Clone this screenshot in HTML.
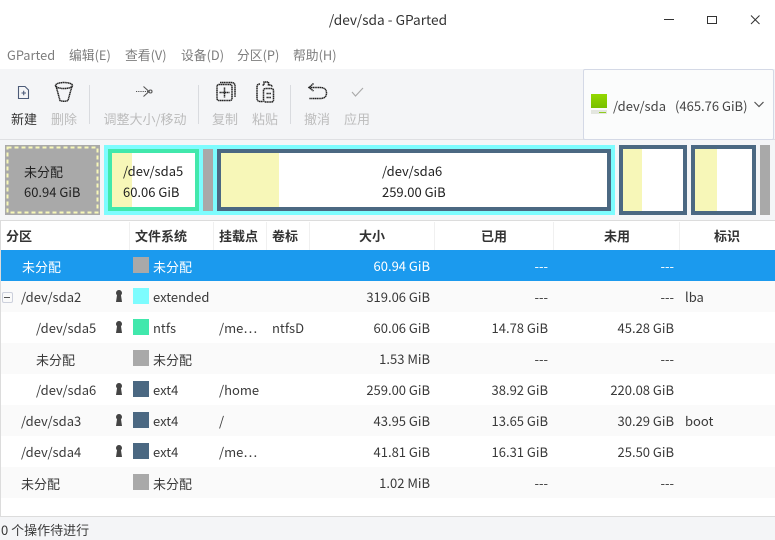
<!DOCTYPE html>
<html><head><meta charset="utf-8">
<style>
html,body{margin:0;padding:0;background:#fff}
#w{position:relative;width:775px;height:540px;overflow:hidden;background:#fff;font-family:"Noto Sans CJK SC","Liberation Sans",sans-serif;font-size:13px;color:#3a3a3a}
#w div,#w span.a{position:absolute}
.t{white-space:nowrap;line-height:18px;height:18px}
.m{top:46px;color:#7d7d7d;font-size:12.800px}
.l{top:110px;font-size:13px;width:60px;text-align:center;color:#bcbcbc}
.sep{width:1px;background:#d9dbdf;top:85px;height:39px}
.h{top:227px;font-weight:bold;font-size:13px;color:#333}
.hs{top:222px;width:1px;height:28px;background:#f0f0f0}
.r{left:1px;width:774px;height:31px}
.sw{left:133px;width:16px;height:16px}
.rt{text-align:right}
</style></head><body>
<div id="w">
<div class="t" style="left:0;width:776px;text-align:center;top:10px;color:#333;font-size:13.700px">/dev/sda - GParted</div>
<svg style="position:absolute;left:660px;top:10px" width="115" height="20" fill="none" stroke="#333" stroke-width="1">
<path d="M4 9.500H14"/><rect x="47.500" y="6.500" width="9" height="7"/><path d="M91 5.500L99.500 14M99.500 5.500L91 14"/></svg>

<div class="t m" style="left:7px">GParted</div>
<div class="t m" style="left:69px">编辑(E)</div>
<div class="t m" style="left:125px">查看(V)</div>
<div class="t m" style="left:181px">设备(D)</div>
<div class="t m" style="left:237px">分区(P)</div>
<div class="t m" style="left:293px">帮助(H)</div>

<div style="left:0;top:69px;width:775px;height:70px;background:#f4f5f7"></div>
<div style="left:0;top:139px;width:775px;height:1px;background:#dfe0e3"></div>
<div style="left:583px;top:69px;width:189px;height:69px;background:#fbfcfc;border:1px solid #d4d9e6;border-radius:2px"></div>

<svg style="position:absolute;left:0;top:75px" width="400" height="40" fill="none" stroke-width="1.100">
<g stroke="#4c5b78"><path d="M18.500 11.500H25L28.500 15V23.500H18.500Z"/><path d="M21.500 18H26M23.700 15.700V20.300"/></g>
<g stroke="#222" stroke-dasharray="1.400 .4" stroke-width="1.500"><ellipse cx="64" cy="10.500" rx="8.500" ry="3"/><path d="M56 11L60 25.500Q64 27 68 25.500L72 11"/></g>
<g stroke="#555" stroke-dasharray="1.200 1"><path d="M136 16.500H148"/></g><path d="M143.500 11.500L149 16.500L143.500 21.500" stroke="#555"/><circle cx="150.500" cy="16.500" r="1.500" stroke="#555"/>
<g stroke="#222" stroke-dasharray="1.400 .4" stroke-width="1.500"><rect x="217" y="9.500" width="15" height="16" rx="2"/><path d="M220 7.500H231Q235 7.500 235 11V22M224.500 12.500V22.500M219.500 17.500H229.500"/>
<path d="M262.500 10H264V7H268.500V10H270Q272 10 272 12M260 9Q257 9 257 12V23Q257 26.500 260 26.500H263"/><rect x="263.500" y="13.500" width="10" height="13.500" rx="2"/><path d="M266.500 18.500H271M266.500 22.500H271"/>
<path d="M309 12.500H320Q326.500 12.500 326.500 18Q326.500 23.500 320 23.500H309M313.500 8.500L309 12.500L313.500 16"/></g>
<path d="M352 17L355.500 21L363 13" stroke="#a9a9a9"/>
</svg>
<div class="t l" style="left:-6px;color:#333">新建</div>
<div class="t l" style="left:34px">删除</div>
<div class="sep" style="left:89px"></div>
<div class="t l" style="left:95px;width:100px">调整大小/移动</div>
<div class="sep" style="left:198px"></div>
<div class="t l" style="left:195px">复制</div>
<div class="t l" style="left:235px">粘贴</div>
<div class="sep" style="left:290px"></div>
<div class="t l" style="left:287px">撤消</div>
<div class="t l" style="left:327px">应用</div>

<div style="left:591px;top:94px;width:16px;height:14px;background:linear-gradient(#94d800,#78c000)"></div>
<div style="left:591px;top:110px;width:16px;height:4px;background:#e3e6df"></div>
<div style="left:599px;top:112px;width:7px;height:1px;background:#8fcc20"></div>
<div class="t" style="left:613px;top:97px;color:#444">/dev/sda</div>
<div class="t" style="left:675px;top:97px;color:#444">(465.76 GiB)</div>
<svg style="position:absolute;left:752px;top:99px" width="14" height="10" fill="none" stroke="#555" stroke-width="1.200"><path d="M2.500 3L7 7.500L11.500 3"/></svg>

<div style="left:0;top:140px;width:775px;height:81px;background:#f4f5f7"></div>
<div style="left:0;top:220px;width:775px;height:1px;background:#dcdcdc"></div>
<!-- graph -->
<div style="left:5px;top:145px;width:95px;height:70px;background:#a9a9a9"></div>
<svg style="position:absolute;left:5px;top:145px" width="95" height="70"><rect x="2.500" y="2.500" width="90" height="65" fill="none" stroke="#f7f7b8" stroke-width="2" stroke-dasharray="4 3"/></svg>
<div class="t" style="left:24px;top:163px;color:#222">未分配</div>
<div class="t" style="left:24px;top:183px;color:#222">60.94 GiB</div>

<div style="left:104px;top:145px;width:511px;height:70px;background:#7dfcfe"></div>
<div style="left:108px;top:149px;width:83px;height:54px;background:#fff;border:4px solid #41e8ac"></div>
<div style="left:112px;top:153px;width:20px;height:54px;background:#f7f7b8"></div>
<div class="t" style="left:123px;top:162px;color:#222">/dev/sda5</div>
<div class="t" style="left:123px;top:183px;color:#222">60.06 GiB</div>
<div style="left:203px;top:149px;width:10px;height:62px;background:#a9a9a9"></div>
<div style="left:217px;top:149px;width:386px;height:54px;background:#fff;border:4px solid #4b6882"></div>
<div style="left:221px;top:153px;width:58px;height:54px;background:#f7f7b8"></div>
<div class="t" style="left:382px;top:162px;color:#222">/dev/sda6</div>
<div class="t" style="left:382px;top:183px;color:#222">259.00 GiB</div>
<div style="left:619px;top:145px;width:60px;height:62px;background:#fff;border:4px solid #4b6882"></div>
<div style="left:623px;top:149px;width:19px;height:62px;background:#f7f7b8"></div>
<div style="left:691px;top:145px;width:57px;height:62px;background:#fff;border:4px solid #4b6882"></div>
<div style="left:695px;top:149px;width:22px;height:62px;background:#f7f7b8"></div>
<div style="left:760px;top:145px;width:10px;height:70px;background:#a9a9a9"></div>

<!-- header -->
<div class="t h" style="left:6px">分区</div>
<div class="t h" style="left:135px">文件系统</div>
<div class="t h" style="left:219px">挂载点</div>
<div class="t h" style="left:272px">卷标</div>
<div class="t h" style="left:359px">大小</div>
<div class="t h" style="left:481px">已用</div>
<div class="t h" style="left:604px">未用</div>
<div class="t h" style="left:714px">标识</div>
<div class="hs" style="left:129px"></div><div class="hs" style="left:213px"></div><div class="hs" style="left:266px"></div><div class="hs" style="left:309px"></div><div class="hs" style="left:434px"></div><div class="hs" style="left:553px"></div><div class="hs" style="left:679px"></div>

<div style="left:0;top:221px;width:1px;height:296px;background:#dcdcdc"></div>
<div class="r" style="top:250px;background:#1b9aee"></div>
<div class="r" style="top:281px;background:#fafafa"></div>
<div class="r" style="top:343px;background:#fafafa"></div>
<div class="r" style="top:405px;background:#fafafa"></div>
<div class="r" style="top:467px;background:#fafafa"></div>

<div class="sw" style="top:257px;background:#a9a9a9"></div>
<div class="sw" style="top:288px;background:#7dfcfe"></div>
<div class="sw" style="top:319px;background:#41e8ac"></div>
<div class="sw" style="top:350px;background:#a9a9a9"></div>
<div class="sw" style="top:381px;background:#4b6882"></div>
<div class="sw" style="top:412px;background:#4b6882"></div>
<div class="sw" style="top:443px;background:#4b6882"></div>
<div class="sw" style="top:474px;background:#a9a9a9"></div>

<div style="left:2px;top:292px;width:9px;height:9px;border:1px solid #ccd0dc;border-radius:2px;background:#fafafa"></div>
<div style="left:4px;top:297px;width:6px;height:1px;background:#555"></div>

<svg style="position:absolute;left:114px;top:290px" width="10" height="14" fill="#444"><path d="M5 0a3 3 0 0 1 2 5.200L8 12H2L3 5.200A3 3 0 0 1 5 0Z"/></svg>
<svg style="position:absolute;left:114px;top:321px" width="10" height="14" fill="#444"><path d="M5 0a3 3 0 0 1 2 5.200L8 12H2L3 5.200A3 3 0 0 1 5 0Z"/></svg>
<svg style="position:absolute;left:114px;top:383px" width="10" height="14" fill="#444"><path d="M5 0a3 3 0 0 1 2 5.200L8 12H2L3 5.200A3 3 0 0 1 5 0Z"/></svg>
<svg style="position:absolute;left:114px;top:414px" width="10" height="14" fill="#444"><path d="M5 0a3 3 0 0 1 2 5.200L8 12H2L3 5.200A3 3 0 0 1 5 0Z"/></svg>
<svg style="position:absolute;left:114px;top:445px" width="10" height="14" fill="#444"><path d="M5 0a3 3 0 0 1 2 5.200L8 12H2L3 5.200A3 3 0 0 1 5 0Z"/></svg>

<!-- row 1 -->
<div class="t" style="left:22px;top:258px;color:#fff">未分配</div>
<div class="t" style="left:153px;top:258px;color:#fff">未分配</div>
<div class="t rt" style="right:345px;top:257px;color:#fff">60.94 GiB</div>
<div class="t rt" style="right:227px;top:257px;color:#fff">---</div>
<div class="t rt" style="right:101px;top:257px;color:#fff">---</div>
<!-- row 2 -->
<div class="t" style="left:21px;top:288px">/dev/sda2</div>
<div class="t" style="left:153px;top:288px">extended</div>
<div class="t rt" style="right:345px;top:288px">319.06 GiB</div>
<div class="t rt" style="right:227px;top:288px">---</div>
<div class="t rt" style="right:101px;top:288px">---</div>
<div class="t" style="left:685px;top:288px">lba</div>
<!-- row 3 -->
<div class="t" style="left:36px;top:319px">/dev/sda5</div>
<div class="t" style="left:153px;top:319px">ntfs</div>
<div class="t" style="left:219px;top:319px">/me…</div>
<div class="t" style="left:272px;top:319px">ntfsD</div>
<div class="t rt" style="right:345px;top:319px">60.06 GiB</div>
<div class="t rt" style="right:227px;top:319px">14.78 GiB</div>
<div class="t rt" style="right:101px;top:319px">45.28 GiB</div>
<!-- row 4 -->
<div class="t" style="left:36px;top:351px">未分配</div>
<div class="t" style="left:153px;top:351px">未分配</div>
<div class="t rt" style="right:345px;top:350px">1.53 MiB</div>
<div class="t rt" style="right:227px;top:350px">---</div>
<div class="t rt" style="right:101px;top:350px">---</div>
<!-- row 5 -->
<div class="t" style="left:36px;top:381px">/dev/sda6</div>
<div class="t" style="left:153px;top:381px">ext4</div>
<div class="t" style="left:219px;top:381px">/home</div>
<div class="t rt" style="right:345px;top:381px">259.00 GiB</div>
<div class="t rt" style="right:227px;top:381px">38.92 GiB</div>
<div class="t rt" style="right:101px;top:381px">220.08 GiB</div>
<!-- row 6 -->
<div class="t" style="left:21px;top:412px">/dev/sda3</div>
<div class="t" style="left:153px;top:412px">ext4</div>
<div class="t" style="left:219px;top:412px">/</div>
<div class="t rt" style="right:345px;top:412px">43.95 GiB</div>
<div class="t rt" style="right:227px;top:412px">13.65 GiB</div>
<div class="t rt" style="right:101px;top:412px">30.29 GiB</div>
<div class="t" style="left:685px;top:412px">boot</div>
<!-- row 7 -->
<div class="t" style="left:21px;top:443px">/dev/sda4</div>
<div class="t" style="left:153px;top:443px">ext4</div>
<div class="t" style="left:219px;top:443px">/me…</div>
<div class="t rt" style="right:345px;top:443px">41.81 GiB</div>
<div class="t rt" style="right:227px;top:443px">16.31 GiB</div>
<div class="t rt" style="right:101px;top:443px">25.50 GiB</div>
<!-- row 8 -->
<div class="t" style="left:21px;top:475px">未分配</div>
<div class="t" style="left:153px;top:475px">未分配</div>
<div class="t rt" style="right:345px;top:474px">1.02 MiB</div>
<div class="t rt" style="right:227px;top:474px">---</div>
<div class="t rt" style="right:101px;top:474px">---</div>

<div style="left:0;top:516px;width:775px;height:1px;background:#dcdcdc"></div>
<div style="left:0;top:517px;width:775px;height:23px;background:#f4f5f7"></div>
<div class="t" style="left:1px;top:521px;color:#3a3a3a">0 个操作待进行</div>
</div>
</body></html>
